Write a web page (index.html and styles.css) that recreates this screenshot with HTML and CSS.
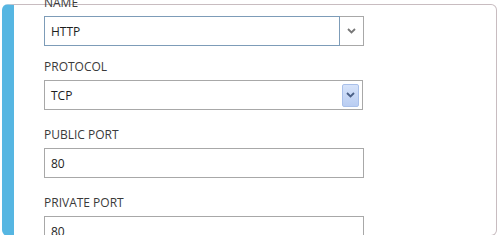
FILE: index.html
```html
<!DOCTYPE html>
<html lang="en">
<head>
    <meta charset="UTF-8">
    <title>Endpoint</title>
    <link rel="stylesheet" href="styles.css">
</head>
<body>

    <div class="panel">
        <div class="fields">
            <div class="field field-first">
                <label class="field-label">NAME</label>
                <div class="combo">
                    <input class="combo-input" type="text" value="HTTP">
                    <div class="combo-button">
                        <svg width="9" height="6" viewBox="0 0 9 6"><polyline points="1,1 4.5,4.5 8,1" fill="none" stroke="#777" stroke-width="1.8"/></svg>
                    </div>
                </div>
            </div>

            <div class="field">
                <label class="field-label">PROTOCOL</label>
                <div class="select">
                    <span class="select-value">TCP</span>
                    <div class="select-button">
                        <svg width="9" height="6" viewBox="0 0 9 6"><polyline points="1,1 4.5,4.5 8,1" fill="none" stroke="#4a5f86" stroke-width="1.8"/></svg>
                    </div>
                </div>
            </div>

            <div class="field">
                <label class="field-label">PUBLIC PORT</label>
                <input class="text-input" type="text" value="80">
            </div>

            <div class="field">
                <label class="field-label">PRIVATE PORT</label>
                <input class="text-input" type="text" value="80">
            </div>
        </div>
    </div>

</body>
</html>
```

FILE: styles.css
```css
body {
    margin: 0;
    padding: 4px 3px 0 2px;
    background-color: #fff;
    font-family: "Open Sans", "Noto Sans", sans-serif;
    font-size: 12px;
}

.panel {
    height: 232px;
    box-sizing: border-box;
    border: 1px solid #c8bcc0;
    border-left: 12px solid #56b6e2;
    border-radius: 6px;
    background-color: #fff;
    /* let the top label poke out, cut the rest at the bottom edge */
    clip-path: inset(-12px 0 1px 0);
}

.fields {
    margin-top: -11px;
    padding-left: 30px;
}

.field {
    margin-bottom: 16px;
}

.field-first {
    margin-bottom: 12px;
}

.field-label {
    display: block;
    line-height: 18px;
    margin-bottom: 4px;
    color: #3a3a3a;
}

.text-input,
.combo-input {
    display: block;
    box-sizing: border-box;
    height: 30px;
    margin: 0;
    padding: 0 6px;
    border: 1px solid #a8a8a8;
    background: #fff;
    font-family: inherit;
    font-size: 12px;
    color: #1e1e1e;
    outline: none;
}

.text-input {
    width: 320px;
}

.combo {
    display: flex;
    width: 320px;
}

.combo-input {
    width: 296px;
    border-color: #7d9cb8;
}

.combo-button {
    width: 24px;
    height: 30px;
    box-sizing: border-box;
    border: 1px solid #a8a8a8;
    border-left: none;
    display: flex;
    align-items: center;
    justify-content: center;
}

.select {
    display: flex;
    align-items: center;
    width: 319px;
    height: 30px;
    box-sizing: border-box;
    border: 1px solid #a8a8a8;
    padding: 0 3px 0 6px;
    color: #1e1e1e;
}

.select-value {
    flex: 1;
}

.select-button {
    width: 17px;
    height: 23px;
    box-sizing: border-box;
    border: 1px solid #a9c0ea;
    border-radius: 2px;
    background: linear-gradient(#d6e3fa, #b9cdf2);
    display: flex;
    align-items: center;
    justify-content: center;
}
```
